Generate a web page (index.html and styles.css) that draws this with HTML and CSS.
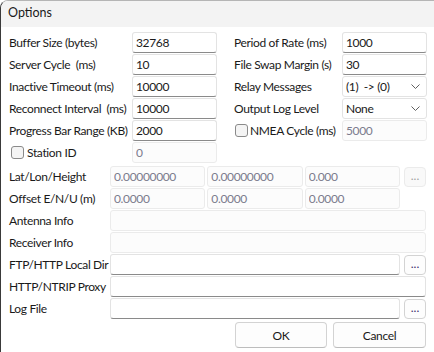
FILE: index.html
```html
<!DOCTYPE html>
<html lang="en">
<head>
    <meta charset="UTF-8">
    <title>Options</title>
    <link rel="stylesheet" href="styles.css">
</head>
<body>
<div class="window">
    <div class="titlebar">Options</div>

    <div class="content">
        <div class="top-grid">
            <span class="lbl">Buffer Size (bytes)</span>
            <input class="field" value="32768">
            <span class="lbl">Period of Rate (ms)</span>
            <input class="field" value="1000">

            <span class="lbl">Server Cycle&nbsp; (ms)</span>
            <input class="field" value="10">
            <span class="lbl">File Swap Margin (s)</span>
            <input class="field" value="30">

            <span class="lbl">Inactive Timeout (ms)</span>
            <input class="field" value="10000">
            <span class="lbl">Relay Messages</span>
            <div class="select">(1)&nbsp; -&gt; (0)
                <svg class="chev" width="9" height="5" viewBox="0 0 9 5"><path d="M0.5 0.5 L4.5 4.5 L8.5 0.5" fill="none" stroke="#606060" stroke-width="1"/></svg>
            </div>

            <span class="lbl">Reconnect Interval&nbsp; (ms)</span>
            <input class="field" value="10000">
            <span class="lbl">Output Log Level</span>
            <div class="select">None
                <svg class="chev" width="9" height="5" viewBox="0 0 9 5"><path d="M0.5 0.5 L4.5 4.5 L8.5 0.5" fill="none" stroke="#606060" stroke-width="1"/></svg>
            </div>

            <span class="lbl">Progress Bar Range (KB)</span>
            <input class="field" value="2000">
            <label class="lbl check"><span class="box"></span>NMEA Cycle (ms)</label>
            <input class="field" value="5000" disabled>

            <label class="lbl check station"><span class="box"></span>Station ID</label>
            <input class="field" value="0" disabled>
        </div>

        <div class="rows">
            <div class="row">
                <span class="lbl">Lat/Lon/Height</span>
                <div class="triple">
                    <input class="field" value="0.00000000" disabled>
                    <input class="field" value="0.00000000" disabled>
                    <input class="field" value="0.000" disabled>
                </div>
                <button class="dots" disabled>...</button>
            </div>
            <div class="row">
                <span class="lbl">Offset E/N/U (m)</span>
                <div class="triple">
                    <input class="field" value="0.0000" disabled>
                    <input class="field" value="0.0000" disabled>
                    <input class="field" value="0.0000" disabled>
                </div>
            </div>
            <div class="row">
                <span class="lbl">Antenna Info</span>
                <input class="field wide" value="" disabled>
            </div>
            <div class="row">
                <span class="lbl">Receiver Info</span>
                <input class="field wide" value="" disabled>
            </div>
            <div class="row">
                <span class="lbl">FTP/HTTP Local Dir</span>
                <input class="field wide" value="">
                <button class="dots">...</button>
            </div>
            <div class="row">
                <span class="lbl">HTTP/NTRIP Proxy</span>
                <input class="field wide" value="">
            </div>
            <div class="row">
                <span class="lbl">Log File</span>
                <input class="field wide" value="">
                <button class="dots">...</button>
            </div>
        </div>

        <div class="actions">
            <button class="btn ok">OK</button>
            <button class="btn cancel">Cancel</button>
        </div>
    </div>
</div>
</body>
</html>
```

FILE: styles.css
```css
body {
    margin: 0;
    background: #ffffff;
    font-family: Lato, "Noto Sans", sans-serif;
    font-size: 12px;
    letter-spacing: -0.35px;
    color: #1a1a1a;
    overflow: hidden;
}

.window {
    width: 434px;
    height: 352px;
    box-sizing: border-box;
    border-left: 1px solid #3a3a3a;
    border-top: 1px solid #b5b5b5;
    border-top-left-radius: 8px;
    background: #ffffff;
}

.titlebar {
    height: 26px;
    line-height: 24px;
    padding-left: 7px;
    font-size: 12.5px;
    letter-spacing: 0;
    background: #f3f3f3;
    border-top-left-radius: 7px;
}

.content {
    padding: 5px 8px 0 8px;
}

/* upper block: two label/value columns */
.top-grid {
    display: grid;
    grid-template-columns: 123px 85px 17px 108px 85px;
    grid-auto-rows: 21px;
    row-gap: 1px;
    align-items: center;
}

.top-grid .lbl:nth-child(4n+3) {
    grid-column: 4;
}

.lbl {
    white-space: nowrap;
}

.field {
    box-sizing: border-box;
    height: 21px;
    width: 100%;
    margin: 0;
    padding: 0 3px;
    font: inherit;
    letter-spacing: inherit;
    color: #1a1a1a;
    background: #ffffff;
    border: 1px solid #e3e3e3;
    border-bottom-color: #8a8a8a;
    border-radius: 3px;
    outline: none;
}

.field:disabled {
    color: #7b7b8c;
    background: #fcfcfc;
    border-color: #ebebeb;
}

.select {
    box-sizing: border-box;
    height: 21px;
    padding: 0 3px;
    display: flex;
    align-items: center;
    justify-content: space-between;
    border: 1px solid #e3e3e3;
    border-radius: 3px;
    white-space: nowrap;
}

.chev {
    margin-right: 3px;
}

.check {
    display: flex;
    align-items: center;
    gap: 2px;
    margin-left: 1px;
}

.check.station {
    gap: 3px;
    margin-left: 2px;
}

.box {
    width: 13px;
    height: 13px;
    box-sizing: border-box;
    border: 1px solid #8a8a8a;
    border-radius: 3px;
    background: #f4f4f4;
}

/* lower block: label + wide fields */
.rows {
    margin-top: 3px;
    display: flex;
    flex-direction: column;
    gap: 1px;
}

.row {
    display: flex;
    align-items: center;
    height: 21px;
}

.row .lbl {
    width: 101px;
    flex: none;
}

.triple {
    width: 290px;
    display: grid;
    grid-template-columns: repeat(3, 1fr);
    gap: 2px;
}

.row .wide {
    flex: 1;
    width: auto;
    min-width: 0;
}

.dots {
    box-sizing: border-box;
    width: 22px;
    height: 20px;
    margin-left: 4px;
    padding: 0 0 4px;
    font: inherit;
    color: #3c2f6e;
    background: #fdfdfd;
    border: 1px solid #d3d3d3;
    border-radius: 4px;
}

.dots:disabled {
    color: #a0a0a0;
    background: #f9f9f9;
    border-color: #ebebeb;
}

.actions {
    display: flex;
    justify-content: flex-end;
    gap: 6px;
    margin-top: 3px;
}

.btn {
    box-sizing: border-box;
    height: 26px;
    font: inherit;
    letter-spacing: inherit;
    color: #1a1a1a;
    background: #fdfdfd;
    border: 1px solid #d3d3d3;
    border-bottom-color: #bdbdbd;
    border-radius: 4px;
}

.ok {
    width: 92px;
}

.cancel {
    width: 93px;
}
```
